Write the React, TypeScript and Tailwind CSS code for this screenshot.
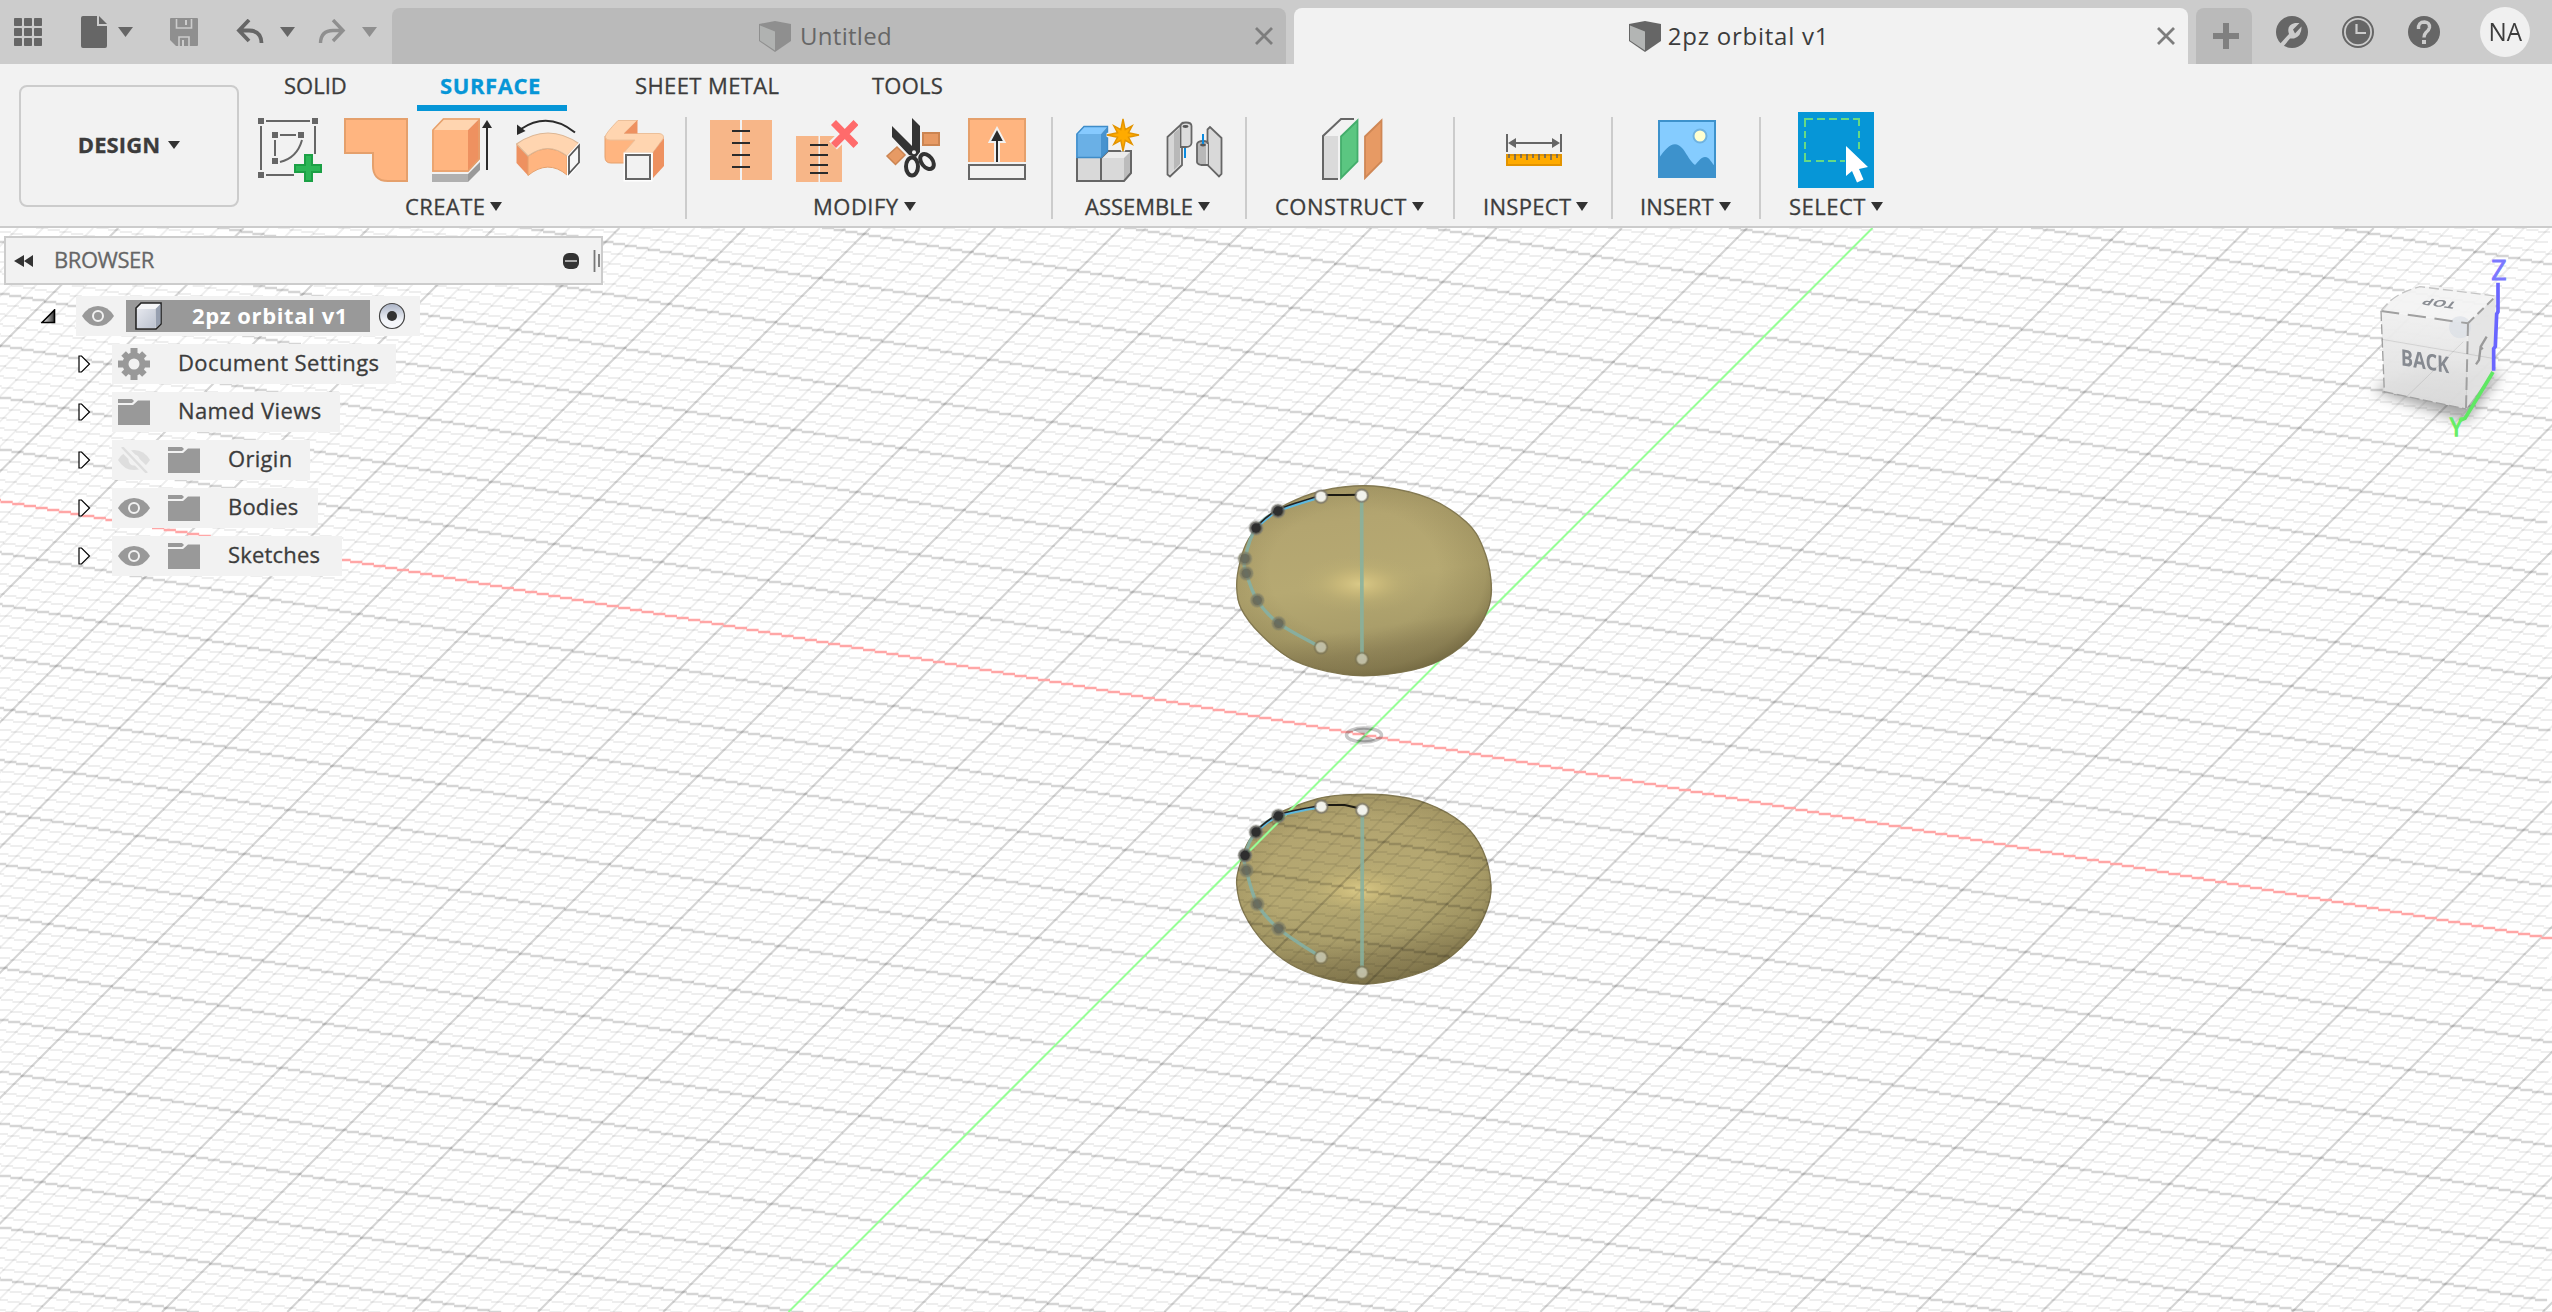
import type { ReactNode } from "react";

/* ---------- shared bits ---------- */

type Pt = [number, number];

function Icon({ box, className, children }: { box: string; className?: string; children: ReactNode }) {
  const [, , w, h] = box.split(" ");
  return (
    <svg viewBox={box} width={w} height={h} fill="none" className={"block shrink-0 " + (className ?? "")}>
      {children}
    </svg>
  );
}

function Caret({ color = "#333", w = 12, h = 9, className }: { color?: string; w?: number; h?: number; className?: string }) {
  return (
    <svg width={w} height={h} viewBox="0 0 12 9" preserveAspectRatio="none" className={"block shrink-0 " + (className ?? "")}>
      <path d="M0 0H12L6 9Z" fill={color} />
    </svg>
  );
}

/* ---------- title bar ---------- */

function CubeGlyph({ side, top }: { side: string; top: string }) {
  return (
    <Icon box="760 20 32 33">
      <path d="M776 21L792 24V41L776 52L760 41V24Z" fill={side} />
      <path d="M761 25.5L776 31.500V50.500L761 40.500Z" fill={top} />
    </Icon>
  );
}

function CloseGlyph() {
  return (
    <Icon box="0 0 20 18">
      <path d="M2 1L18 17M18 1L2 17" stroke="#7d7d7d" strokeWidth="2.8" />
    </Icon>
  );
}

function DocTab({ label, active }: { label: string; active?: boolean }) {
  return (
    <div
      className={
        active
          ? "relative flex h-14 w-[894px] items-center justify-center rounded-t-lg bg-[#f2f2f2] text-[#3c3c3c]"
          : "relative flex h-14 w-[894px] items-center justify-center rounded-t-lg bg-[#bababa] text-[#666]"
      }
    >
      <div className={active ? "flex items-center gap-[7px] pr-[24px]" : "flex items-center gap-[9px] pr-[27px]"}>
        <CubeGlyph side={active ? "#666" : "#8f8f8f"} top={active ? "#b3b5b4" : "#b0b2b1"} />
        <span className={active ? "text-[24px] leading-8 tracking-[0.75px]" : "text-[24px] leading-8 tracking-[0.3px]"}>{label}</span>
      </div>
      <div className="absolute right-[12px] top-[19px]">
        <CloseGlyph />
      </div>
    </div>
  );
}

function TitleBar() {
  return (
    <header className="flex h-16 items-end bg-[#ccc]">
      <div className="flex h-16 w-[392px] items-center pl-[14px]">
        <Icon box="14 18 28 28">
          {[14, 24, 34].map((x) =>
            [18, 28, 38].map((y) => <rect key={x + "-" + y} x={x} y={y} width="8" height="8" rx="0.8" fill="#666" />),
          )}
        </Icon>
        <Icon box="81 16 26 32" className="ml-[39px]">
          <path d="M83 16H97V26H107V46Q107 48 105 48H83Q81 48 81 46V18Q81 16 83 16Z" fill="#666" />
          <path d="M99 16L107 24H99Z" fill="#666" />
        </Icon>
        <Caret color="#666" w={15} h={10} className="ml-[11px]" />
        <Icon box="170 18 28 28" className="ml-[37px]">
          <path d="M171 18H197Q198 18 198 19V45Q198 46 197 46H176L170 40V19Q170 18 171 18Z" fill="#8f8f8f" />
          <path d="M176.500 19V28H191.500V19M179 46V37H189V46" stroke="#ccc" strokeWidth="1.6" />
          <path d="M186 20V25M183 40V46" stroke="#ccc" strokeWidth="2" />
        </Icon>
        <Icon box="236 19 28 26" className="ml-[38px]">
          <path d="M249 20L239 30.500L249 41M239.500 30.500H249Q261 30.500 261.500 43" stroke="#666" strokeWidth="3.800" />
        </Icon>
        <Caret color="#666" w={15} h={10} className="ml-[16px]" />
        <Icon box="318 19 28 26" className="ml-[23px]">
          <path d="M333 20L343 30.500L333 41M342.500 30.500H333Q321 30.500 320.500 43" stroke="#8f8f8f" strokeWidth="3.4" />
        </Icon>
        <Caret color="#8f8f8f" w={15} h={10} className="ml-[16px]" />
      </div>
      <DocTab label="Untitled" />
      <div className="w-2" />
      <DocTab label="2pz orbital v1" active />
      <div className="ml-2 flex h-14 w-14 items-center justify-center rounded-t-lg bg-[#bababa] pl-[3px]">
        <Icon box="0 0 26 26">
          <path d="M13 0V26M0 13H26" stroke="#808080" strokeWidth="6" />
        </Icon>
      </div>
      <div className="flex h-16 flex-1 items-center pl-6">
        <Icon box="-16 -16 32 32">
          <circle r="16" fill="#666" />
          <path d="M-13 13L-3 2Q-6 -7 3 -9L7.500 -9L1 -2.500L3 1.500L9.500 -5.500Q10 4 2 6.500L-2 6.500L-9 15Z" fill="#ccc" />
        </Icon>
        <Icon box="-16 -16 32 32" className="ml-[34px]">
          <circle r="15" stroke="#666" strokeWidth="2" />
          <circle r="12.200" fill="#666" />
          <path d="M-1.500 -8V1H8" stroke="#ccc" strokeWidth="2.200" />
        </Icon>
        <Icon box="-16 -16 32 32" className="ml-[34px]">
          <circle r="16" fill="#666" />
          <path d="M-5.500 -3Q-6 -10 0.500 -10Q6 -9.500 5.500 -4.500Q5 -2 2 0.500Q0 2.500 0 5.500" stroke="#ccc" strokeWidth="3.400" />
          <path d="M-2 8H2V12H-2Z" fill="#ccc" />
        </Icon>
        <div className="ml-10 flex h-[50px] w-[50px] items-center justify-center rounded-full bg-[#f0f0f0] text-[25px] text-[#3c3c3c]">
          <span className="scale-x-[0.97]">NA</span>
        </div>
      </div>
    </header>
  );
}

/* ---------- ribbon icons ---------- */

const PEACH = "#ffb580";
const PEACH_EDGE = "#e5a06c";
const PEACH_LIGHT = "#ffd5b0";
const PEACH_DARK = "#ee9160";

const SketchIcon = () => (
  <Icon box="258 118 64 64">
    <path d="M258 118h6v6h-6zM312 118h6v6h-6zM258 172h6v6h-6zM272 132h6v6h-6zM298 132h6v6h-6zM272 158h6v6h-6z" fill="#666" />
    <path d="M266 121H310M261 126V170M315 126V154M266 175H294M280 135H296M275 140V156M302 140Q297 158 280 162" stroke="#666" strokeWidth="2" />
    <path d="M305 155h7v10h9v7h-9v9h-7v-9h-10v-7h10z" fill="#2bb656" stroke="#1ba045" strokeWidth="2" />
  </Icon>
);

const PatchIcon = () => (
  <Icon box="344 118 64 64">
    <path d="M345 119H407V181H388C377 181 373 174 373 166V153H345Z" fill={PEACH} stroke={PEACH_EDGE} strokeWidth="2" />
  </Icon>
);

const ExtrudeIcon = () => (
  <Icon box="430 118 64 64">
    <path d="M432 174H468V182H432Z" fill="#b0b0b0" />
    <path d="M468 174L480 162V170L468 182Z" fill="#999" />
    <path d="M432 130H468V172H432Z" fill={PEACH} />
    <path d="M432 130L443 118H480L468 130Z" fill={PEACH_LIGHT} />
    <path d="M468 130L480 118V159L468 172Z" fill={PEACH_DARK} />
    <path d="M433 130L443.500 119H479V159L468 171H433Z" stroke={PEACH_EDGE} strokeWidth="1.500" />
    <path d="M487 170V126" stroke="#2b2b2b" strokeWidth="2" />
    <path d="M482 128L487 120L492 128Z" fill="#2b2b2b" />
  </Icon>
);

const RevolveIcon = () => (
  <Icon box="516 118 64 64">
    <path d="M516.500 144L528 156V175.500L516.500 163Z" fill={PEACH_DARK} />
    <path d="M528 156Q548 141 567 156V175Q548 159 528 175.500Z" fill={PEACH} stroke={PEACH_EDGE} strokeWidth="1" />
    <path d="M516.500 144Q548 122 579.500 144L567 156Q548 141 528 156Z" fill={PEACH_LIGHT} stroke="#dcb795" strokeWidth="1.200" />
    <path d="M569 156.500L579 145.500V162.500L569 173.500Z" fill="#f7f7f7" stroke="#fff" strokeWidth="4" />
    <path d="M569 156.500L579 145.500V162.500L569 173.500Z" fill="#f7f7f7" stroke="#555" strokeWidth="1.800" />
    <path d="M575 132.500Q548 111 521 129" stroke="#2b2b2b" strokeWidth="2" />
    <path d="M517 135V124.500L525.500 131Z" fill="#2b2b2b" />
  </Icon>
);

const SweepIcon = () => (
  <Icon box="602 118 64 64">
    <path d="M605 136V157Q605 163 611 163H624L636 140Z" fill={PEACH} stroke={PEACH_EDGE} />
    <path d="M618 120.500H637.500L624 133.500H659Q664 134 663.500 138L653 152.500H624L635 140H610Q605 140 605.500 136Q606 133 618 120.500Z" fill={PEACH_LIGHT} stroke="#ecc09a" />
    <path d="M637.500 120V133.500H624Z" fill={PEACH_DARK} />
    <path d="M664 138V166L653 178V152.500Z" fill={PEACH_DARK} />
    <path d="M626 155H650V179H626Z" fill="#f2f2f2" stroke="#fff" strokeWidth="5" />
    <path d="M626 155H650V179H626Z" fill="#f2f2f2" stroke="#666" strokeWidth="2" />
  </Icon>
);

const StitchIcon = () => (
  <Icon box="708 118 64 64">
    <path d="M710 120H740V180H710ZM742 120H772V180H742Z" fill="#f7b688" />
    <path d="M732 131H750M732 143H750M732 155H750M732 167H750" stroke="#2b2b2b" strokeWidth="2" />
  </Icon>
);

const UnstitchIcon = () => (
  <Icon box="794 118 64 64">
    <path d="M796 136H818.500V182H796ZM820 136H842V182H820Z" fill="#f7b688" />
    <path d="M833 122.500L856.500 145.500M856.500 122.500L833 145.500" stroke="#f2f2f2" strokeWidth="11" />
    <path d="M810 145H828M810 155H828M810 165H828M810 173H828" stroke="#2b2b2b" strokeWidth="2" />
    <path d="M833.500 122.500L856 145.500M856 122.500L833.500 145.500" stroke="#ff6b6b" strokeWidth="7" />
  </Icon>
);

const TrimIcon = () => (
  <Icon box="880 118 64 64">
    <path d="M923 133H939V145H923Z" fill="#e79a64" stroke="#cc8552" strokeWidth="2" />
    <path d="M897 147L905 155L895.500 164.500L887 156Z" fill="#e79a64" stroke="#cc8552" strokeWidth="1.500" />
    <path d="M912 118L920 126V152L916 157L909 155L892 137V126L912 146Z" fill="#333" />
    <ellipse cx="912" cy="166.500" rx="6" ry="9" stroke="#333" strokeWidth="4" />
    <ellipse cx="927" cy="161.500" rx="5.500" ry="8.500" transform="rotate(-38 927 161.500)" stroke="#333" strokeWidth="4" />
    <circle cx="914" cy="152.300" r="2" fill="#f2f2f2" />
  </Icon>
);

const ExtendIcon = () => (
  <Icon box="966 118 64 64">
    <path d="M968 118H1026V162H968Z" fill={PEACH} />
    <path d="M969 162V119H1025V162" stroke={PEACH_EDGE} strokeWidth="2" />
    <path d="M997 162V136" stroke="#f2f2f2" strokeWidth="6" />
    <path d="M997 128L1004.500 142H989.500Z" fill="#2b2b2b" stroke="#f2f2f2" strokeWidth="2" />
    <path d="M997 162V136" stroke="#2b2b2b" strokeWidth="2" />
    <path d="M969 165H1025V179H969Z" fill="#f2f2f2" stroke="#666" strokeWidth="2" />
  </Icon>
);

const STAR = Array.from({ length: 16 }, (_, i) => {
  const r = i % 2 ? 5.800 : i % 4 === 0 ? 16 : 13;
  const a = (i * Math.PI) / 8;
  return `${(1123 + r * Math.sin(a)).toFixed(1)},${(135 - r * Math.cos(a)).toFixed(1)}`;
}).join(" ");

const ComponentIcon = () => (
  <Icon box="1074 118 66 64">
    <path d="M1077 158H1124V181H1077Z" fill="#d9d9d9" />
    <path d="M1101 158L1108 151H1131L1124 158Z" fill="#ececec" />
    <path d="M1124 158L1131 151V173L1124 181Z" fill="#bcbcbc" />
    <path d="M1077 158V181H1124L1131 173V151H1108L1101 158V181" stroke="#666" strokeWidth="2" />
    <path d="M1076 134H1101V158H1076Z" fill="#6ab0e6" />
    <path d="M1076 134L1084 126H1108L1101 134Z" fill="#86caff" />
    <path d="M1101 134L1108 126V151L1101 158Z" fill="#4793cf" />
    <path d="M1077 157.500V134L1084 126.500H1107.500V151L1101 157.500Z" stroke="#3f8cc8" strokeWidth="1.400" />
    <polygon points={STAR} fill="#f2f2f2" stroke="#f2f2f2" strokeWidth="4" />
    <polygon points={STAR} fill="#ffab00" stroke="#e39400" strokeWidth="1.400" />
  </Icon>
);

const JointIcon = () => (
  <Icon box="1162 118 64 64">
    <path d="M1167.500 137L1182 123.500V165L1170 176.500L1167.500 174.500Z" fill="#e2e2e2" stroke="#666" strokeWidth="1.800" />
    <path d="M1169 138L1180 128V164L1169 174Z" fill="#d6d6d6" />
    <path d="M1180.500 126Q1181 122.500 1186 122.500Q1191.500 122.500 1191.500 126V143Q1191 147 1186 147H1180.500Z" fill="#dcdcdc" stroke="#666" strokeWidth="1.800" />
    <path d="M1180 128V164L1174 170V133Z" fill="#b8b8b8" />
    <ellipse cx="1185.500" cy="126.500" rx="3" ry="1.400" fill="#555" />
    <path d="M1185 148V158M1203 134V145" stroke="#0a8be0" strokeWidth="2" />
    <path d="M1207.500 129.500L1210 127L1221.500 138V174L1219 176.500L1207.500 165Z" fill="#d9d9d9" stroke="#666" strokeWidth="1.800" />
    <path d="M1197 144Q1198 141 1203 141Q1208 141 1208 144V165H1201Q1197 164 1197 162Z" fill="#b8b8b8" stroke="#666" strokeWidth="1.800" />
    <path d="M1207 144V164" stroke="#eee" strokeWidth="1.500" />
    <ellipse cx="1203" cy="145" rx="3" ry="1.400" fill="#555" />
    <path d="M1203 134V144" stroke="#0a8be0" strokeWidth="2" />
  </Icon>
);

const PlaneIcon = () => (
  <Icon box="1320 118 64 64">
    <path d="M1323 136H1338V179H1323Z" fill="#dadada" />
    <path d="M1354 119H1341L1323 136V179H1338" stroke="#666" strokeWidth="2" />
    <path d="M1341 136.500L1357.500 120.500V161.500L1341 178Z" fill="#5bc681" stroke="#43ad6b" strokeWidth="1.800" />
    <path d="M1365 136.500L1381.500 120.500V161.500L1365 178Z" fill="#e79a64" stroke="#cf8755" strokeWidth="1.800" />
  </Icon>
);

const MeasureIcon = () => (
  <Icon box="1502 118 64 64">
    <path d="M1507 134V152M1561 134V152" stroke="#666" strokeWidth="2" />
    <path d="M1512 143H1556" stroke="#666" strokeWidth="2" />
    <path d="M1508 143L1516 138V148ZM1560 143L1552 138V148Z" fill="#666" />
    <path d="M1507 155H1561V165H1507Z" fill="#ffab00" stroke="#e39400" strokeWidth="2" />
    <path d="M1509 154V158M1515 154V160M1521 154V158M1527 154V160M1533 154V158M1539 154V160M1545 154V158M1551 154V160M1557 154V158" stroke="#666" strokeWidth="1.600" />
  </Icon>
);

const PictureIcon = () => (
  <Icon box="1655 118 64 64">
    <path d="M1659 121H1715V177H1659Z" fill="#85ccff" stroke="#3d92cc" strokeWidth="2" />
    <circle cx="1700" cy="136" r="6.500" fill="#ffffd0" stroke="#6fb2e0" strokeWidth="2" />
    <path d="M1659 158C1667 146 1675 139 1683 149C1688 156 1690 161 1695 165C1699 161 1701 157 1705 157C1710 157 1711 163 1715 166V177H1659Z" fill="#3d92cc" />
  </Icon>
);

const SelectIcon = () => (
  <Icon box="1798 112 76 76">
    <path d="M1798 112H1874V188H1798Z" fill="#0696d7" />
    <path d="M1805 127V119H1813M1817 119H1825M1829 119H1837M1841 119H1849M1853 119H1859V126M1859 131V138M1859 142V149M1805 131V138M1805 142V149M1805 153V161H1811M1816 161H1824M1828 161H1836M1840 161H1845" stroke="#66d985" strokeWidth="2" />
    <path d="M1846 146L1868 167L1859 169L1863.500 179.500L1857 182.500L1852 171L1846 176Z" fill="#fff" />
  </Icon>
);

/* ---------- ribbon ---------- */

function Group({
  label,
  width,
  iconPad,
  labelPad,
  tracking,
  last,
  children,
}: {
  label: string;
  width: string;
  iconPad: string;
  labelPad: string;
  tracking?: string;
  last?: boolean;
  children: ReactNode;
}) {
  return (
    <section className={"flex h-[102px] flex-col " + width + (last ? "" : " border-r-2 border-[#ccc]")}>
      <div className={"flex h-[66px] items-center gap-[22px] " + iconPad}>{children}</div>
      <div className={"mt-[11px] flex h-6 items-center " + labelPad}>
        <span className={"whitespace-nowrap text-[22px] leading-6 " + (tracking ?? "")}>{label}</span>
        <Caret className="ml-[5px]" />
      </div>
    </section>
  );
}

function Ribbon() {
  return (
    <div className="flex h-[164px] border-b-2 border-[#ccc] bg-[#f2f2f2] text-[#3c3c3c] [-webkit-text-stroke:0.3px]">
      <div className="ml-[19px] mt-[21px] flex h-[122px] w-[220px] items-center justify-center rounded-lg border-2 border-[#ccc] pb-[3px]">
        <span className="text-[22px] font-bold tracking-[0.1px]">DESIGN</span>
        <Caret className="ml-2" h={8} />
      </div>
      <div className="flex flex-col">
        <nav className="flex h-[47px] items-end text-[22px] leading-[26px]">
          <div className="ml-[45px] h-[47px] w-16 pt-[8px]">SOLID</div>
          <div className="ml-[69px] flex h-[47px] w-[150px] flex-col items-center justify-between pt-[8px]">
            <span className="pr-[3px] font-bold tracking-[0.6px] text-[#0696d7]">SURFACE</span>
            <div className="h-1.5 w-full bg-[#0696d7]" />
          </div>
          <div className="ml-[68px] h-[47px] w-[237px] whitespace-nowrap pt-[8px] tracking-[0.4px]">SHEET METAL</div>
          <div className="h-[47px] pt-[8px] tracking-[0.2px]">TOOLS</div>
        </nav>
        <div className="mt-[6px] flex">
          <Group label="CREATE" width="w-[448px]" iconPad="pl-[19px]" labelPad="pl-[166px]" tracking="tracking-[0.4px]">
            <SketchIcon />
            <PatchIcon />
            <ExtrudeIcon />
            <RevolveIcon />
            <SweepIcon />
          </Group>
          <Group label="MODIFY" width="w-[366px]" iconPad="pl-[21px]" labelPad="pl-[126px]" tracking="tracking-[0.5px]">
            <StitchIcon />
            <UnstitchIcon />
            <TrimIcon />
            <ExtendIcon />
          </Group>
          <Group label="ASSEMBLE" width="w-[194px]" iconPad="pl-[21px]" labelPad="pl-[32px]">
            <ComponentIcon />
            <JointIcon />
          </Group>
          <Group label="CONSTRUCT" width="w-[208px]" iconPad="pl-[73px]" labelPad="pl-[28px]" tracking="tracking-[0.5px]">
            <PlaneIcon />
          </Group>
          <Group label="INSPECT" width="w-[158px]" iconPad="pl-[47px]" labelPad="pl-[28px]" tracking="tracking-[0.3px]">
            <MeasureIcon />
          </Group>
          <Group label="INSERT" width="w-[148px]" iconPad="pl-[42px]" labelPad="pl-[27px]" tracking="tracking-[0.2px]">
            <PictureIcon />
          </Group>
          <Group label="SELECT" width="w-[160px]" iconPad="pl-[37px]" labelPad="pl-[28px]" tracking="tracking-[0.5px]" last>
            <SelectIcon />
          </Group>
        </div>
      </div>
    </div>
  );
}

/* ---------- browser tree ---------- */

const Eye = () => (
  <Icon box="0 0 32 20">
    <path d="M0 10Q6 0 16 0Q26 0 32 10Q26 20 16 20Q6 20 0 10Z" fill="#999" />
    <circle cx="16" cy="10" r="5" stroke="#f2f2f2" strokeWidth="2" />
  </Icon>
);

const EyeOff = () => (
  <Icon box="0 0 32 26">
    <path d="M0 13Q6 3 16 3Q26 3 32 13Q26 23 16 23Q6 23 0 13Z" fill="#dedede" />
    <circle cx="16" cy="13" r="5.500" fill="#f2f2f2" />
    <path d="M3 -1L30 26" stroke="#f2f2f2" strokeWidth="8" />
    <path d="M4 0L29 26" stroke="#dedede" strokeWidth="2.500" />
  </Icon>
);

const Folder = () => (
  <Icon box="0 0 32 26">
    <path d="M0 0H14L16 2L14 4H0Z" fill="#999" />
    <path d="M0 6H15L20 1.500H32V26H0Z" fill="#999" />
  </Icon>
);

const Gear = () => (
  <Icon box="-16 -16 32 32">
    {[0, 45, 90, 135].map((a) => (
      <path key={a} d="M-3.500 -16H3.500V16H-3.500Z" transform={`rotate(${a}) scale(${a % 90 ? 0.92 : 1})`} fill="#999" />
    ))}
    <circle r="11.500" fill="#999" />
    <circle r="5.500" fill="#f2f2f2" />
  </Icon>
);

function TreeRow({ label, width, kind, tracking }: { label: string; width: string; kind: "gear" | "folder" | "hidden" | "visible"; tracking: string }) {
  return (
    <div className="flex h-10 items-center pl-[78px]">
      <Icon box="0 0 13 18" className="mr-[21px]">
        <path d="M1 1H3.500L11.500 9L3.500 17H1Z" fill="#fff" stroke="#000" strokeWidth="1.200" />
      </Icon>
      <div className={"flex h-10 items-center bg-[#f2f2f2] pl-1.5 " + width}>
        {kind === "gear" && <Gear />}
        {kind === "folder" && <Folder />}
        {kind === "hidden" && <EyeOff />}
        {kind === "visible" && <Eye />}
        {(kind === "hidden" || kind === "visible") && (
          <div className="ml-[18px]">
            <Folder />
          </div>
        )}
        <span className={"ml-[28px] whitespace-nowrap pb-[3px] text-[22px] leading-[37px] " + tracking}>{label}</span>
      </div>
    </div>
  );
}

function BrowserPanel() {
  return (
    <aside className="relative w-[620px] pt-2 text-[#3c3c3c] [-webkit-text-stroke:0.3px]">
      <div className="ml-1 flex h-[49px] w-[599px] items-center border-2 border-[#ccc] bg-[#f2f2f2]">
        <Icon box="0 0 20 12" className="ml-2">
          <path d="M0 6L10 0V12ZM10 6L19 0V12Z" fill="#333" />
        </Icon>
        <span className="ml-[20px] w-[509px] pb-[3px] text-[22px] leading-[37px] tracking-[-0.45px] text-[#666]">BROWSER</span>
        <Icon box="0 0 16 16">
          <rect width="16" height="16" rx="6" fill="#333" />
          <path d="M2 8H14" stroke="#aaa" strokeWidth="2" />
        </Icon>
        <Icon box="0 0 8 22" className="ml-[14px]">
          <path d="M1.500 0V22M6 4V17" stroke="#777" strokeWidth="1.800" />
        </Icon>
      </div>
      <div className="mt-[11px] flex flex-col gap-2">
        <div className="flex h-10 items-center pl-[41px]">
          <Icon box="0 0 15 15" className="mr-5">
            <defs>
              <linearGradient id="twist" x1="0" x2="1">
                <stop offset="0" stopColor="#fff" />
                <stop offset="1" stopColor="#333" />
              </linearGradient>
            </defs>
            <path d="M1 13.500L13.500 1V13.500Z" fill="url(#twist)" stroke="#000" strokeWidth="1.600" />
          </Icon>
          <div className="flex h-10 w-[344px] items-center bg-[#f2f2f2] pl-1.5">
            <Eye />
            <div className="ml-3 flex h-8 w-[244px] items-center bg-[#999] pl-[9px]">
              <Icon box="0 0 28 28">
                <defs>
                  <linearGradient id="cubeFront" x1="0" y1="0" x2="1" y2="1">
                    <stop offset="0" stopColor="#e6e8ee" />
                    <stop offset="1" stopColor="#bcc3d0" />
                  </linearGradient>
                </defs>
                <path d="M1 6L6 1H26V22L21 27H1Z" fill="#f5f6f8" stroke="#222" strokeWidth="1.600" />
                <path d="M2 7H20V26H2Z" fill="url(#cubeFront)" />
                <path d="M20.500 7L25.500 2V21.500L20.500 26Z" fill="#97a0b0" />
              </Icon>
              <span className="ml-[29px] whitespace-nowrap pb-[3px] text-[22px] font-bold leading-7 tracking-[0.6px] text-white [-webkit-text-stroke:0px]">2pz orbital v1</span>
            </div>
            <Icon box="-14 -14 28 28" className="ml-2">
              <defs>
                <linearGradient id="radio" x1="0" y1="0" x2="0" y2="1">
                  <stop offset="0" stopColor="#aab3c6" />
                  <stop offset="0.700" stopColor="#f4f6fa" />
                </linearGradient>
              </defs>
              <circle r="12.500" fill="url(#radio)" stroke="#444" strokeWidth="1.200" />
              <circle r="5" fill="#333" />
            </Icon>
          </div>
        </div>
        <TreeRow label="Document Settings" width="w-[284px]" kind="gear" tracking="tracking-[0.4px]" />
        <TreeRow label="Named Views" width="w-[228px]" kind="folder" tracking="tracking-[0.4px]" />
        <TreeRow label="Origin" width="w-[198px]" kind="hidden" tracking="tracking-[0.3px]" />
        <TreeRow label="Bodies" width="w-[206px]" kind="visible" tracking="tracking-[0.2px]" />
        <TreeRow label="Sketches" width="w-[230px]" kind="visible" tracking="tracking-[0.2px]" />
      </div>
    </aside>
  );
}

/* ---------- 3D canvas ---------- */

const OX = 1365.3;
const OY = 735.2;
const SLOPE = 0.1716;
const TOP = 228;
const BOTTOM = 1312;
const WIDTH = 2552;

/* A shallow line rasterised as short two pixel high runs. */
function runs(offset: number): string {
  const y0 = OY - OX * SLOPE + offset;
  let d = "";
  const first = Math.floor(Math.max(y0, TOP) / 2) * 2;
  const last = Math.min(y0 + WIDTH * SLOPE, BOTTOM);
  for (let y = first; y <= last; y += 2) {
    const xa = (y - 1 - y0) / SLOPE;
    d += `M${xa.toFixed(1)} ${y}h12.200`;
  }
  return d;
}

function diagonal(n: number): string {
  const shift = n * 125.3;
  return `M${(OX + shift + (OY - TOP)).toFixed(1)} ${TOP}L${(OX + shift - (BOTTOM - OY)).toFixed(1)} ${BOTTOM}`;
}

let majorRuns = "";
let minorRuns = "";
for (let i = -95; i <= 80; i++) {
  if (i === 0) continue;
  const d = runs((i * 51.87) / 5);
  if (i % 5 === 0) majorRuns += d;
  else minorRuns += d;
}
let majorDiagonals = "";
let minorDiagonals = "";
for (let i = -80; i <= 90; i++) {
  if (i === 0) continue;
  if (i % 5 === 0) majorDiagonals += diagonal(i / 5);
  else minorDiagonals += diagonal(i / 5);
}

function smooth(points: Pt[], closed: boolean): string {
  const n = points.length;
  const at = (i: number): Pt => (closed ? points[(i + n) % n] : points[Math.max(0, Math.min(n - 1, i))]);
  let d = `M${points[0][0]} ${points[0][1]}`;
  for (let i = 0; i < (closed ? n : n - 1); i++) {
    const [a, b, c, e] = [at(i - 1), at(i), at(i + 1), at(i + 2)];
    d += `C${b[0] + (c[0] - a[0]) / 6} ${b[1] + (c[1] - a[1]) / 6} ${c[0] - (e[0] - b[0]) / 6} ${c[1] - (e[1] - b[1]) / 6} ${c[0]} ${c[1]}`;
  }
  return closed ? d + "Z" : d;
}

const UPPER: Pt[] = [
  [110, 380], [119, 310], [144, 240], [201, 170], [310, 110], [430, 81], [550, 81], [690, 116], [799, 186], [848, 260],
  [873, 360], [865, 445], [805, 540], [699, 611], [560, 643], [430, 643], [281, 601], [182, 523], [123, 445],
];
const LOWER: Pt[] = [
  [110, 343], [121, 280], [151, 206], [231, 133], [350, 87], [430, 75], [560, 75], [680, 100], [789, 161], [848, 240],
  [873, 345], [860, 420], [813, 503], [709, 588], [550, 637], [430, 637], [291, 593], [197, 523], [132, 430],
];

function Body({ shape, id, glowY, dy }: { shape: Pt[]; id: string; glowY: number; dy: number }) {
  const d = smooth(shape, true);
  return (
    <g transform={`translate(1200 ${dy}) scale(0.33333)`}>
      <defs>
        <linearGradient id={id + "v"} x1="0.4" y1="0" x2="0.600" y2="1">
          <stop offset="0" stopColor="#aa9d6a" />
          <stop offset="0.180" stopColor="#b3a570" />
          <stop offset="0.500" stopColor="#b6a972" />
          <stop offset="0.740" stopColor="#aa9e6a" />
          <stop offset="0.860" stopColor="#95895c" />
          <stop offset="1" stopColor="#857a50" />
        </linearGradient>
        <radialGradient id={id + "g"} gradientUnits="userSpaceOnUse" cx="480" cy={glowY} r="190" gradientTransform={`translate(0 ${glowY * 0.55}) scale(1 0.45)`}>
          <stop offset="0" stopColor="#dccb88" stopOpacity="0.950" />
          <stop offset="0.350" stopColor="#d2c07d" stopOpacity="0.600" />
          <stop offset="0.650" stopColor="#c6b777" stopOpacity="0.250" />
          <stop offset="1" stopColor="#bfb074" stopOpacity="0" />
        </radialGradient>
        <radialGradient id={id + "s"} cx="0.460" cy="0.450" r="0.600">
          <stop offset="0.550" stopColor="#6b6038" stopOpacity="0" />
          <stop offset="0.860" stopColor="#6b6038" stopOpacity="0.220" />
          <stop offset="1" stopColor="#5b5230" stopOpacity="0.550" />
        </radialGradient>
      </defs>
      <path d={d} fill={`url(#${id}v)`} stroke="#857b54" strokeWidth="4" />
      <path d={d} fill={`url(#${id}s)`} />
      <path d={d} fill={`url(#${id}g)`} />
    </g>
  );
}

type Knot = { at: Pt; tone: "white" | "dark" | "dim" | "pale" };

const UPPER_KNOTS: Knot[] = [
  { at: [485, 107], tone: "white" }, { at: [363, 110], tone: "white" }, { at: [234, 153], tone: "dark" },
  { at: [168, 204], tone: "dark" }, { at: [135, 296], tone: "dim" }, { at: [139, 340], tone: "dim" },
  { at: [172, 421], tone: "dim" }, { at: [236, 490], tone: "dim" }, { at: [363, 562], tone: "pale" }, { at: [486, 597], tone: "pale" },
];
const LOWER_KNOTS: Knot[] = [
  { at: [487, 120], tone: "white" }, { at: [364, 110], tone: "white" }, { at: [235, 138], tone: "dark" },
  { at: [168, 186], tone: "dark" }, { at: [135, 256], tone: "dark" }, { at: [139, 301], tone: "dim" },
  { at: [172, 402], tone: "dim" }, { at: [236, 476], tone: "dim" }, { at: [363, 562], tone: "pale" }, { at: [486, 608], tone: "pale" },
];
const TONES = {
  white: { core: "#f2f2ec", ring: "#77746a", o: 1 },
  dark: { core: "#2e2e2e", ring: "#77776f", o: 1 },
  dim: { core: "#66685a", ring: "#86846a", o: 0.9 },
  pale: { core: "#c3c1a9", ring: "#7a7456", o: 0.95 },
};

function SketchCurve({ knots, dy }: { knots: Knot[]; dy: number }) {
  const arc = knots.slice(1, 9).map((k) => k.at);
  const [a, b, c, e] = knots.slice(0, 4).map((k) => k.at);
  return (
    <g transform={`translate(1200 ${dy}) scale(0.33333)`} fill="none">
      <path d={`M${a[0]} ${a[1]}L${knots[9].at[0]} ${knots[9].at[1]}`} stroke="#86b2a0" strokeWidth="11" strokeOpacity="0.850" />
      <path d={smooth(arc, false)} stroke="#83b2a8" strokeWidth="10" strokeOpacity="0.850" />
      <path d={smooth([b, c, e], false)} stroke="#5cb8e0" strokeWidth="8" />
      <path d={smooth([b, c, e], false)} stroke="#222" strokeWidth="5" transform="translate(0 -4)" />
      <path d={`M${b[0]} ${b[1] - 5}H${b[0] + 70}L${a[0]} ${a[1] - 3}`} stroke="#1c1a12" strokeWidth="6" />
      {knots.map(({ at, tone }, i) => (
        <g key={i} opacity={TONES[tone].o}>
          <circle cx={at[0]} cy={at[1]} r="23" fill={TONES[tone].ring} fillOpacity="0.300" />
          <circle cx={at[0]} cy={at[1]} r="18.500" stroke={TONES[tone].ring} strokeWidth="4" strokeOpacity="0.700" fill={TONES[tone].core} fillOpacity="0.600" />
          <circle cx={at[0]} cy={at[1]} r="14" fill={TONES[tone].core} />
        </g>
      ))}
    </g>
  );
}

function ViewCube() {
  return (
    <g transform="translate(2330 230) scale(0.33333)" fill="none">
      <defs>
        <filter id="cubeShadow" x="-30%" y="-60%" width="160%" height="220%">
          <feGaussianBlur stdDeviation="20" />
        </filter>
        <filter id="cubeSoft" x="-10%" y="-10%" width="120%" height="120%">
          <feGaussianBlur stdDeviation="2" />
        </filter>
        <linearGradient id="cubeFace" x1="0" y1="0" x2="0" y2="1">
          <stop offset="0" stopColor="#f0f0f0" />
          <stop offset="1" stopColor="#dcdcdc" />
        </linearGradient>
      </defs>
      <path d="M130 480L410 575L510 430L300 400Z" fill="#000" fillOpacity="0.360" filter="url(#cubeShadow)" />
      <path d="M153 243L414 280L408 537L163 485Z" fill="url(#cubeFace)" fillOpacity="0.950" />
      <path d="M153 243Q190 190 270 170Q330 165 498 198L414 280Z" fill="#f3f3f3" fillOpacity="0.930" />
      <path d="M414 280L498 198L490 425L408 537Z" fill="#e4e4e4" fillOpacity="0.950" />
      <circle cx="390" cy="292" r="33" fill="#d6dae4" fillOpacity="0.550" filter="url(#cubeSoft)" />
      <g filter="url(#cubeSoft)">
        <g stroke="#a0a0a0" strokeWidth="6">
          <path d="M153 243L414 280" strokeDasharray="55 26" />
          <path d="M414 280L408 537" strokeDasharray="38 16" />
          <path d="M414 280L498 198" strokeDasharray="26 14" />
          <path d="M153 243L163 485L408 537" strokeWidth="4" strokeDasharray="30 10" />
          <path d="M153 243Q190 190 270 170L498 198" stroke="#c4c4c4" strokeWidth="4" strokeDasharray="30 12" />
        </g>
        <path d="M156 328L412 372L494 386M175 222L158 243M230 500L400 335" stroke="#000" strokeOpacity="0.100" strokeWidth="3" />
        <text transform="matrix(0.8 0.130 0.020 1 213 406)" fontFamily="Open Sans, sans-serif" fontWeight="700" fontSize="68" fill="#868a91">
          BACK
        </text>
        <text transform="matrix(-1.100 -0.150 0.500 -0.620 384 217)" fontFamily="Open Sans, sans-serif" fontWeight="700" fontSize="44" fill="#8b8e94">
          TOP
        </text>
        <path d="M438 403L447 390L452 350L470 320M452 350L458 358" stroke="#999" strokeWidth="7" />
      </g>
      <path d="M504 158V245L500 252L496 350L491 356V422" stroke="#6a66ff" strokeWidth="11" />
      <path d="M489 426L405 565L388 572" stroke="#5fe863" strokeWidth="11" />
      <text x="484" y="149" fontFamily="Open Sans, sans-serif" fontSize="80" fill="#7b78ff" stroke="#7b78ff" strokeWidth="3">
        Z
      </text>
      <text x="360" y="619" fontFamily="Open Sans, sans-serif" fontSize="74" textLength="38" lengthAdjust="spacingAndGlyphs" fill="#66ee66" stroke="#66ee66" strokeWidth="4">
        Y
      </text>
    </g>
  );
}

function Scene() {
  return (
    <svg className="absolute inset-0 block" width="2552" height="1084" viewBox="0 228 2552 1084" fill="none">
      <Body shape={LOWER} id="lower" glowY={360} dy={770} />
      <path d={minorDiagonals} stroke="#000" strokeOpacity="0.065" strokeWidth="1.900" />
      <path d={minorRuns} stroke="#000" strokeOpacity="0.065" strokeWidth="2" />
      <path d={majorDiagonals} stroke="#000" strokeOpacity="0.165" strokeWidth="2.100" />
      <path d={majorRuns} stroke="#000" strokeOpacity="0.165" strokeWidth="2.300" />
      <path d={runs(0)} stroke="#ffa6a6" strokeWidth="2.500" />
      <path d={diagonal(0)} stroke="#96ff96" strokeWidth="2" />
      <ellipse cx="1364" cy="735" rx="17.500" ry="7" stroke="#000" strokeOpacity="0.220" strokeWidth="3.500" />
      <path d="M1364 735L1373 729Q1360 726 1353 730ZM1364 735L1356 741Q1368 744 1376 740Z" fill="#000" fillOpacity="0.220" />
      <Body shape={UPPER} id="upper" glowY={372} dy={460} />
      <SketchCurve knots={UPPER_KNOTS} dy={460} />
      <SketchCurve knots={LOWER_KNOTS} dy={770} />
      <ViewCube />
    </svg>
  );
}

export default function App() {
  return (
    <div className="flex h-[1312px] w-[2552px] flex-col overflow-hidden bg-white font-['Open_Sans','Noto_Sans',sans-serif]">
      <TitleBar />
      <Ribbon />
      <main className="relative flex-1 overflow-hidden bg-white">
        <Scene />
        <BrowserPanel />
      </main>
    </div>
  );
}
